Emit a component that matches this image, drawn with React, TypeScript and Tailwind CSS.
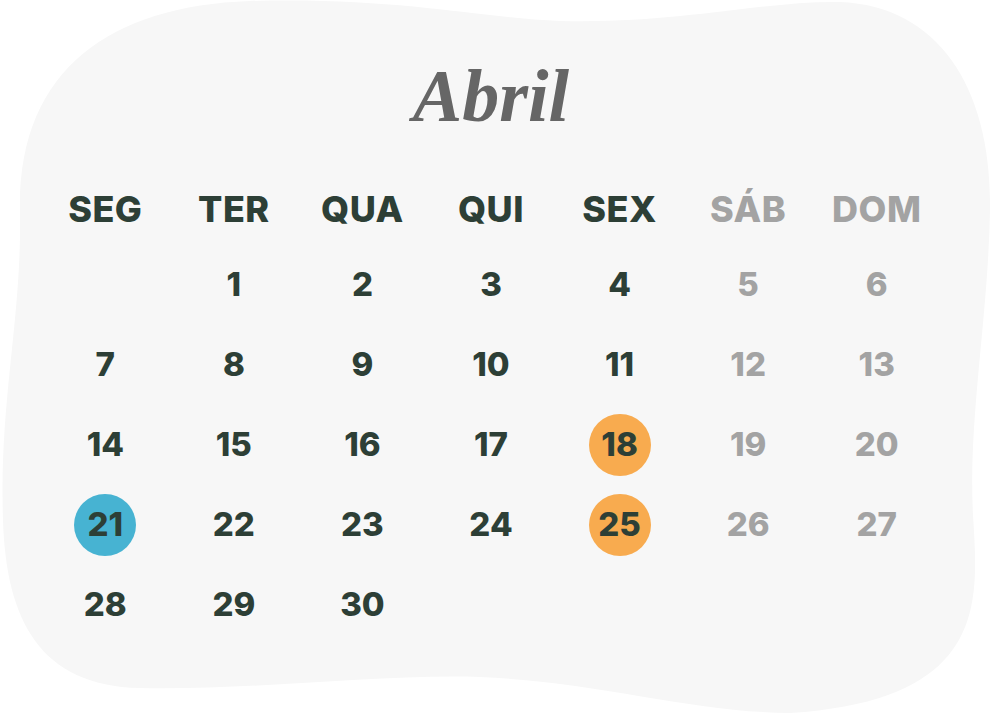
import React from 'react';

interface Day {
    n: number | null;
    mark?: 'blue' | 'orange';
}

const headers = ['SEG', 'TER', 'QUA', 'QUI', 'SEX', 'SÁB', 'DOM'];

// April starts on a Tuesday
const buildWeeks = (): Day[][] => {
    const cells: Day[] = [{ n: null }];
    for (let i = 1; i <= 30; i++) {
        const mark = i === 21 ? 'blue' : i === 18 || i === 25 ? 'orange' : undefined;
        cells.push({ n: i, mark });
    }
    const weeks: Day[][] = [];
    for (let i = 0; i < cells.length; i += 7) {
        weeks.push(cells.slice(i, i + 7));
    }
    return weeks;
};

function Blob() {
    return (
        <svg className="absolute inset-0 w-full h-full" viewBox="0 0 1000 714" preserveAspectRatio="none">
            <path
                fill="#f7f7f7"
                d="M 250,1 C 400,-3 480,18 560,21 C 680,24 760,1 840,2 C 940,6 992,90 990,210 C 988,320 968,420 973,515 C 978,600 990,700 790,713 C 690,712 600,682 480,677 C 380,674 260,690 140,688 C 40,686 6,620 3,520 C -1,400 22,320 20,210 C 18,70 110,6 250,1 Z"
            />
        </svg>
    );
}

export default function App() {
    const weeks = buildWeeks();

    return (
        <div className="relative w-[1000px] h-[714px] bg-white overflow-hidden">
            <Blob />
            <div className="relative pl-[41px] w-[941px] font-['Inter',sans-serif]">
                <h1 className="h-[169px] pt-[59px] text-center text-[74px] leading-[74px] font-bold italic text-[#666666] font-['Liberation_Serif',serif]">
                    Abril
                </h1>
                <div className="grid grid-cols-7 h-[76px] items-start">
                    {headers.map((h, i) => (
                        <div
                            key={h}
                            className={`flex justify-center h-[80px] items-center text-[36px] font-extrabold tracking-[0.5px] ${i >= 5 ? 'text-[#a3a3a3]' : 'text-[#2d3f36]'}`}
                        >
                            {h}
                        </div>
                    ))}
                </div>
                {weeks.map((week, wi) => (
                    <div key={wi} className="grid grid-cols-7 h-[80px]">
                        {Array.from({ length: 7 }).map((_, ci) => {
                            const d = week[ci];
                            const weekend = ci >= 5;
                            return (
                                <div key={ci} className="flex items-center justify-center">
                                    {d && d.n !== null && (
                                        <div
                                            className={`flex items-center justify-center w-[62px] h-[62px] rounded-full text-[33px] font-extrabold
                                            ${d.mark === 'blue' ? 'bg-[#47b3d2]' : d.mark === 'orange' ? 'bg-[#f8ab4f]' : ''}
                                            ${weekend ? 'text-[#a3a3a3]' : 'text-[#2d3f36]'}`}
                                        >
                                            {d.n}
                                        </div>
                                    )}
                                </div>
                            );
                        })}
                    </div>
                ))}
            </div>
        </div>
    );
}
